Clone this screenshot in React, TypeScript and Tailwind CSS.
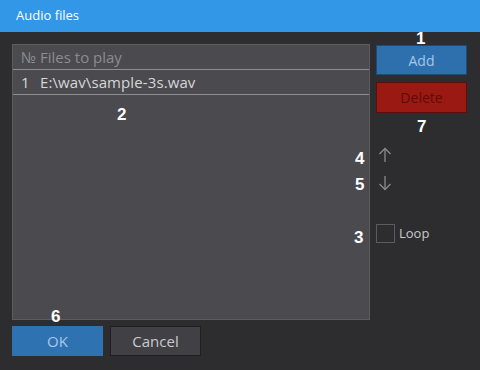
import React from "react";

function UpArrow() {
  return (
    <svg width="14" height="16" viewBox="0 0 14 16" fill="none" stroke="#8a8a8e" strokeWidth="1.3">
      <path d="M7 15V1.5" />
      <path d="M1.5 7L7 1.5L12.5 7" />
    </svg>
  );
}
function DownArrow() {
  return (
    <svg width="14" height="16" viewBox="0 0 14 16" fill="none" stroke="#8a8a8e" strokeWidth="1.3">
      <path d="M7 1V14.5" />
      <path d="M1.5 9L7 14.5L12.5 9" />
    </svg>
  );
}

export default function App() {
  const font = { fontFamily: '"Open Sans", "Noto Sans", sans-serif' };
  const ann = { fontFamily: '"Liberation Sans", Arial, sans-serif' };
  return (
    <div className="relative w-[480px] h-[370px] bg-[#2d2d30] overflow-hidden" style={font}>
      <div className="h-[32px] bg-[#3197e6] flex items-center pl-[16px] text-[13px] text-white">Audio files</div>
      <div className="flex pl-[12px] pt-[12px] gap-[6px]">
        <div className="w-[358px] h-[276px] bg-[#4b4a4f] border border-[#5c5b60] flex flex-col">
          <div className="h-[25px] flex items-center border-b border-[#8e8d92] text-[15px] text-[#8d8c91] pl-[8px]">
            <span className="w-[19px] tracking-[1px]">№</span>
            <span>Files to play</span>
          </div>
          <div className="h-[25px] flex items-center border-b border-[#8e8d92] text-[15px] text-[#d6d6d8] pl-[8px]">
            <span className="w-[19px]">1</span>
            <span className="tracking-[0.1px]">E:\wav\sample-3s.wav</span>
          </div>
        </div>
        <div className="flex flex-col w-[91px] pt-[1px]">
          <div className="h-[30px] bg-[#2e70ad] border border-[#1b4c7a] flex items-center justify-center text-[14px] text-[#a5c6e4]">Add</div>
          <div className="h-[31px] mt-[7px] bg-[#9a1912] border border-[#5c0e0a] flex items-center justify-center text-[14px] text-[#5e0c08]">Delete</div>
          <div className="mt-[34px] pl-[2px] flex flex-col gap-[12px]">
            <UpArrow />
            <DownArrow />
          </div>
          <div className="mt-[33px] flex items-center gap-[4px]">
            <div className="w-[19px] h-[19px] border border-[#5c5b60] bg-[#2d2d30]" />
            <span className="text-[13px] text-[#c9c9cc]">Loop</span>
          </div>
        </div>
      </div>
      <div className="flex pl-[12px] pt-[6px] gap-[7px]">
        <div className="w-[91px] h-[30px] bg-[#2e72b2] flex items-center justify-center text-[15px] text-[#a9c9e8]">OK</div>
        <div className="w-[91px] h-[30px] bg-[#414045] border border-[#1f1f22] flex items-center justify-center text-[15px] text-[#cacacd]">Cancel</div>
      </div>
      <div style={ann}>
        <span className="absolute left-[416px] top-[26px] text-[17px] font-bold text-white">1</span>
        <span className="absolute left-[117px] top-[102px] text-[17px] font-bold text-white">2</span>
        <span className="absolute left-[417px] top-[114px] text-[17px] font-bold text-white">7</span>
        <span className="absolute left-[355px] top-[146px] text-[17px] font-bold text-white">4</span>
        <span className="absolute left-[355px] top-[172px] text-[17px] font-bold text-white">5</span>
        <span className="absolute left-[354px] top-[225px] text-[17px] font-bold text-white">3</span>
        <span className="absolute left-[51px] top-[304px] text-[17px] font-bold text-white">6</span>
      </div>
    </div>
  );
}
